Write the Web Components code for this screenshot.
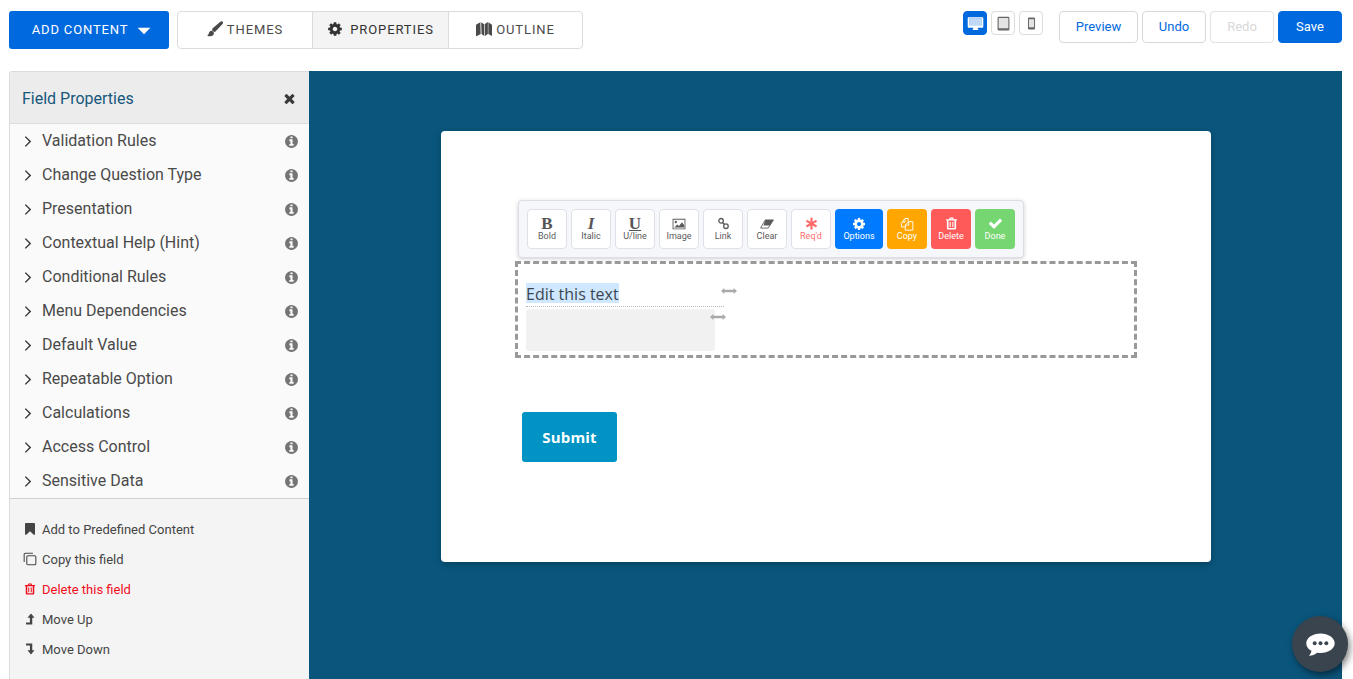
<!DOCTYPE html>
<html>
<head>
<meta charset="utf-8">
<title>Form builder</title>
<style>
  html, body { margin: 0; height: 100%; overflow: hidden; background: #fff; font-family: Roboto, sans-serif; }
</style>
</head>
<body>
<form-builder></form-builder>
<script>
// svg icons, 1792 grid ones are the font-awesome shapes, the others are drawn on a 24 grid
const FA = {
  cog: 'M1152 896q0-106-75-181t-181-75-181 75-75 181 75 181 181 75 181-75 75-181zm512-109v222q0 12-8 23t-20 13l-185 28q-19 54-39 91 35 50 107 138 10 12 10 25t-9 23q-27 37-99 108t-94 71q-12 0-26-9l-138-108q-44 23-91 38-16 136-29 186-7 28-36 28h-222q-14 0-24.5-8.5t-11.5-21.5l-28-184q-49-16-90-37l-141 107q-10 9-25 9-14 0-25-11-126-114-165-168-7-10-7-23 0-12 8-23 15-21 51-66.5t54-70.5q-27-50-41-99l-183-27q-13-2-21-12.5t-8-23.5v-222q0-12 8-23t19-13l186-28q14-46 39-92-40-57-107-138-10-12-10-24 0-10 9-23 26-36 98.5-107.5t94.5-71.5q13 0 26 10l138 107q44-23 91-38 16-136 29-186 7-28 36-28h222q14 0 24.5 8.5t11.5 21.5l28 184q49 16 90 37l142-107q9-9 24-9 13 0 25 10 129 119 165 170 7 8 7 22 0 12-8 23-15 21-51 66.5t-54 70.5q26 50 41 98l183 28q13 2 21 12.5t8 23.5z',
  info: 'M1152 1376v-160q0-14-9-23t-23-9h-96v-512q0-14-9-23t-23-9h-320q-14 0-23 9t-9 23v160q0 14 9 23t23 9h96v320h-96q-14 0-23 9t-9 23v160q0 14 9 23t23 9h448q14 0 23-9t9-23zm-128-896v-160q0-14-9-23t-23-9h-192q-14 0-23 9t-9 23v160q0 14 9 23t23 9h192q14 0 23-9t9-23zm640 416q0 209-103 385.5t-279.5 279.5-385.5 103-385.5-103-279.5-279.5-103-385.5 103-385.5 279.5-279.5 385.5-103 385.5 103 279.5 279.5 103 385.5z',
  times: 'M1490 1322q0 40-28 68l-136 136q-28 28-68 28t-68-28l-294-294-294 294q-28 28-68 28t-68-28l-136-136q-28-28-28-68t28-68l294-294-294-294q-28-28-28-68t28-68l136-136q28-28 68-28t68 28l294 294 294-294q28-28 68-28t68 28l136 136q28 28 28 68t-28 68l-294 294 294 294q28 28 28 68z',
  check: 'M1671 566q0 40-28 68l-724 724-136 136q-28 28-68 28t-68-28l-136-136-362-362q-28-28-28-68t28-68l136-136q28-28 68-28t68 28l294 295 656-657q28-28 68-28t68 28l136 136q28 28 28 68z',
  bookmark: 'M1420 128q23 0 44 9 33 13 52.5 41t19.5 62v1289q0 34-19.5 62t-52.5 41q-19 8-44 8-48 0-83-32l-441-424-441 424q-36 33-83 33-23 0-44-9-33-13-52.5-41t-19.5-62v-1289q0-34 19.5-62t52.5-41q21-9 44-9h1048z'
}
const DRAWN = {
  caret: '<path d="M1 6.500h22l-11 11z" fill="currentColor"/>',
  brush: '<path d="M23.500 1c-1-1-2.500-.8-3.500.1L9 10.500c-1 1-1.500 2-1.600 3.300l3.200 2.800c1.300-.2 2.400-.9 3.200-2L23.300 4.400c.9-1 1.100-2.400.2-3.400z" fill="currentColor"/><path d="M6.800 14.600c-2.400.3-3.600 1.900-4 3.800-.3 1.500-1 2.600-2.600 3.200 2.800 1.900 6.700 1.700 8.900-.3 1.300-1.200 1.600-2.600 1-3.900-.6-1.300-1.800-2.600-3.300-2.800z" fill="currentColor"/>',
  map: '<path d="M0 5.500L6.500 2l.5 17.500L.8 23 0 22.500zM7.800 2l4.200 3 .3 17.500-4-3zM13 5l4-3 .8 0v17.500L13.300 22.500zM18.500 2L24 5.500V22.500L18.500 19.500z" fill="currentColor"/>',
  desktop: '<path fill-rule="evenodd" d="M2.500 3h19A1.500 1.500 0 0 1 23 4.500v12a1.500 1.500 0 0 1-1.500 1.500H15c0 1.200.5 2 1 2.500v.5H8v-.5c.5-.5 1-1.300 1-2.500H2.500A1.500 1.500 0 0 1 1 16.500v-12A1.500 1.500 0 0 1 2.500 3zM3 5v9.500h18V5z" fill="currentColor"/><rect x="3" y="5" width="18" height="9.500" fill="#fff" opacity=".75"/>',
  tablet: '<path fill-rule="evenodd" d="M4.500 1h15a2 2 0 0 1 2 2v18a2 2 0 0 1-2 2h-15a2 2 0 0 1-2-2V3a2 2 0 0 1 2-2zM4.300 3v16.500h15.400V3z" fill="currentColor"/><rect x="4.300" y="3" width="15.400" height="16.500" fill="currentColor" opacity=".18"/>',
  phone: '<path fill-rule="evenodd" d="M7.500 1h9a2 2 0 0 1 2 2v18a2 2 0 0 1-2 2h-9a2 2 0 0 1-2-2V3a2 2 0 0 1 2-2zM7.300 4v15h9.400V4z" fill="currentColor"/><rect x="7.300" y="4" width="9.400" height="15" fill="currentColor" opacity=".18"/>',
  chevron: '<path d="M8 3l9 9-9 9" fill="none" stroke="currentColor" stroke-width="2.600"/>',
  image: '<path fill-rule="evenodd" d="M1 3h22v18H1zM2.500 4.500v15h19v-15z" fill="currentColor"/><circle cx="6.500" cy="8.500" r="2" fill="currentColor"/><path d="M4 18l5-5 3 2.500 5-6.500 4 5v4z" fill="currentColor"/>',
  link: '<circle cx="7.500" cy="7" r="4.200" fill="none" stroke="currentColor" stroke-width="2.400"/><circle cx="16.500" cy="17" r="4.200" fill="none" stroke="currentColor" stroke-width="2.400"/><path d="M10 10l4 4" stroke="currentColor" stroke-width="2.400"/>',
  eraser: '<path d="M9 5h14L14 19H1z" fill="none" stroke="currentColor" stroke-width="1.500"/><path d="M9 5h14l-6 9.500H6z" fill="currentColor"/>',
  asterisk: '<path d="M10 1.500h4v7.300l6.300-3.600 2 3.500-6.300 3.500 6.300 3.500-2 3.500-6.300-3.600v7.300h-4v-7.300l-6.300 3.600-2-3.500L8 12.200 1.700 8.700l2-3.500L10 8.800z" fill="currentColor"/>',
  copy: '<path d="M9 17H2.500v-6l6-8.500H14V8" fill="none" stroke="currentColor" stroke-width="1.600"/><path d="M8.500 2.500V9H3" fill="none" stroke="currentColor" stroke-width="1.400"/><path d="M15 8h7v14.500H9V13.500zM15 8v6H9.500" fill="none" stroke="currentColor" stroke-width="1.600"/>',
  trash: '<path fill-rule="evenodd" d="M9 1h6l1.500 3H22v2.500h-1.500V21a2 2 0 0 1-2 2h-13a2 2 0 0 1-2-2V6.500H2V4h5.500zM10 4h4l-.6-1h-2.800zM6.500 6.500V20.500h11V6.500zM8.500 9H10.500v9.500H8.500zM13.500 9h2v9.500h-2z" fill="currentColor"/>',
  copyline: '<path d="M2 17V4a2 2 0 0 1 2-2h13" fill="none" stroke="currentColor" stroke-width="1.800"/><rect x="6.500" y="6.500" width="15.500" height="15.500" rx="2" fill="none" stroke="currentColor" stroke-width="1.800"/>',
  up: '<path d="M14 1l7 8.500h-4.500V23H4v-3.800h7.800V9.500H7z" fill="currentColor"/>',
  down: '<path d="M4 1h12.500v13.500H21L14 23l-7-8.500h4.800V4.800H4z" fill="currentColor"/>',
  resize: '<path d="M0 6l5-4.500V4.200h14V1.500L24 6l-5 4.500V7.800H5v2.700z" fill="currentColor"/>',
  chat: '<path d="M12 3.500c6 0 11 3.300 11 7.500s-5 7.500-11 7.500c-.9 0-1.800-.1-2.700-.2-1.500 1.400-3.700 2.300-6.300 2.500 1-1 1.800-2.300 2-3.900C2.800 15.900 1 13.600 1 11c0-4.200 5-7.500 11-7.500z" fill="#fff"/><circle cx="7.500" cy="11" r="1.500" fill="#3a444e"/><circle cx="12" cy="11" r="1.500" fill="#3a444e"/><circle cx="16.500" cy="11" r="1.500" fill="#3a444e"/>'
}

class UiIcon extends HTMLElement {
  connectedCallback() {
    const name = this.getAttribute('name')
    const size = this.getAttribute('size') || 14
    const inner = FA[name]
      ? `<svg viewBox="0 0 1792 1792" width="${size}" height="${size}"><path fill="currentColor" d="${FA[name]}"/></svg>`
      : `<svg viewBox="0 0 24 24" width="${size}" height="${size}">${DRAWN[name]}</svg>`
    this.attachShadow({ mode: 'open' }).innerHTML = `
      <style>
        :host { display: inline-flex; flex: none; }
        svg { display: block; }
      </style>${inner}`
  }
}
customElements.define('ui-icon', UiIcon)

class ModeTab extends HTMLElement {
  connectedCallback() {
    this.attachShadow({ mode: 'open' }).innerHTML = `
      <style>
        :host {
          display: flex; align-items: center; justify-content: center; gap: 4px;
          width: 135px; box-sizing: border-box; height: 100%; padding-bottom: 2px;
          font: 400 13px Roboto, sans-serif; letter-spacing: .9px; color: #4a4a4a;
        }
        :host([active]) { background: #f4f4f4; color: #333; gap: 7px; }
      </style>
      <ui-icon name="${this.getAttribute('icon')}" size="${this.getAttribute('icon-size') || 16}"></ui-icon>
      <slot></slot>`
  }
}
customElements.define('mode-tab', ModeTab)

class DeviceButton extends HTMLElement {
  connectedCallback() {
    this.attachShadow({ mode: 'open' }).innerHTML = `
      <style>
        :host {
          display: flex; align-items: center; justify-content: center;
          width: 24px; height: 24px; box-sizing: border-box;
          border: 1px solid #dcdcdc; border-radius: 4px; color: #666; background: #fff;
        }
        :host([active]) { background: #0069de; border-color: #0069de; color: #fff; }
      </style>
      <ui-icon name="${this.getAttribute('icon')}" size="${this.getAttribute('size') || 14}"></ui-icon>`
  }
}
customElements.define('device-button', DeviceButton)

class ActionButton extends HTMLElement {
  connectedCallback() {
    this.attachShadow({ mode: 'open' }).innerHTML = `
      <style>
        :host {
          display: flex; align-items: center; justify-content: center;
          width: 64px; height: 32px; box-sizing: border-box; padding-bottom: 2px;
          border: 1px solid #d8d8d8; border-radius: 4px; background: #fff;
          font: 400 13px Roboto, sans-serif; color: #0069de;
        }
        :host([wide]) { width: 79px; }
        :host([disabled]) { color: #d8d8d8; border-color: #e2e2e2; }
        :host([primary]) { background: #0069de; border-color: #0069de; color: #fff; }
      </style>
      <slot></slot>`
  }
}
customElements.define('action-button', ActionButton)

class TopBar extends HTMLElement {
  connectedCallback() {
    this.attachShadow({ mode: 'open' }).innerHTML = `
      <style>
        :host { display: flex; align-items: flex-start; height: 71px; box-sizing: border-box; padding: 11px 11px 0 9px; }
        .add {
          display: flex; align-items: center; justify-content: center; gap: 9px;
          width: 160px; height: 38px; box-sizing: border-box; padding: 0 0 2px 5px;
          border-radius: 3px; background: #0069de; color: #fff;
          font: 400 13px Roboto, sans-serif; letter-spacing: .85px;
        }
        .add ui-icon { margin-top: 3px; }
        .tabs {
          display: flex; width: 406px; height: 38px; margin-left: 8px; box-sizing: border-box;
          border: 1px solid #dcdcdc; border-radius: 4px; overflow: hidden;
        }
        mode-tab + mode-tab { border-left: 1px solid #dcdcdc; }
        .devices { display: flex; gap: 4px; margin-left: auto; }
        .actions { display: flex; gap: 4px; margin-left: 16px; }
      </style>
      <div class="add">ADD CONTENT <ui-icon name="caret" size="14"></ui-icon></div>
      <div class="tabs">
        <mode-tab icon="brush" style="width:134px">THEMES</mode-tab>
        <mode-tab icon="cog" active style="width:136px">PROPERTIES</mode-tab>
        <mode-tab icon="map" style="width:134px">OUTLINE</mode-tab>
      </div>
      <div class="devices">
        <device-button icon="desktop" active size="17"></device-button>
        <device-button icon="tablet" size="15"></device-button>
        <device-button icon="phone" size="13"></device-button>
      </div>
      <div class="actions">
        <action-button wide>Preview</action-button>
        <action-button>Undo</action-button>
        <action-button disabled>Redo</action-button>
        <action-button primary>Save</action-button>
      </div>`
  }
}
customElements.define('top-bar', TopBar)

class PanelRow extends HTMLElement {
  connectedCallback() {
    this.attachShadow({ mode: 'open' }).innerHTML = `
      <style>
        :host {
          display: flex; align-items: center; height: 34px; box-sizing: border-box;
          padding: 0 10px 0 11px; font: 400 16px Roboto, sans-serif; color: #4a4a4a;
        }
        .label { margin-left: 8px; flex: 1; padding-bottom: 1px; }
        ui-icon:last-child { color: #757575; }
        .chev { color: #333; }
      </style>
      <ui-icon class="chev" name="chevron" size="13"></ui-icon>
      <span class="label"><slot></slot></span>
      <ui-icon name="info" size="15"></ui-icon>`
  }
}
customElements.define('panel-row', PanelRow)

class PanelLink extends HTMLElement {
  connectedCallback() {
    this.attachShadow({ mode: 'open' }).innerHTML = `
      <style>
        :host {
          display: flex; align-items: center; gap: 6px; height: 30px;
          font: 400 13px Roboto, sans-serif; color: #444;
        }
        :host([danger]) { color: #f00d1c; }
        .box { display: flex; justify-content: center; width: 13px; }
      </style>
      <span class="box"><ui-icon name="${this.getAttribute('icon')}" size="${this.getAttribute('size') || 12}"></ui-icon></span>
      <slot></slot>`
  }
}
customElements.define('panel-link', PanelLink)

class SidePanel extends HTMLElement {
  connectedCallback() {
    this.attachShadow({ mode: 'open' }).innerHTML = `
      <style>
        :host {
          display: flex; flex-direction: column; flex: none; width: 300px; box-sizing: border-box;
          border: 1px solid #dcdcdc; border-width: 1px 0 0 1px; background: #f4f4f4;
          border-top-left-radius: 3px; margin-left: 9px;
        }
        header {
          display: flex; align-items: center; justify-content: space-between; box-sizing: border-box;
          height: 52px; padding: 1px 12px 0 12px; background: #ececec; border-bottom: 1px solid #dedede;
          font: 400 16px Roboto, sans-serif; color: #17577c;
        }
        header ui-icon { color: #3a3a3a; }
        .rows { background: #fafafa; border-bottom: 1px solid #cfcfcf; height: 374px; }
        .links { padding: 15px 0 0 13px; }
      </style>
      <header>Field Properties <ui-icon name="times" size="15"></ui-icon></header>
      <div class="rows">
        <panel-row>Validation Rules</panel-row>
        <panel-row>Change Question Type</panel-row>
        <panel-row>Presentation</panel-row>
        <panel-row>Contextual Help (Hint)</panel-row>
        <panel-row>Conditional Rules</panel-row>
        <panel-row>Menu Dependencies</panel-row>
        <panel-row>Default Value</panel-row>
        <panel-row>Repeatable Option</panel-row>
        <panel-row>Calculations</panel-row>
        <panel-row>Access Control</panel-row>
        <panel-row>Sensitive Data</panel-row>
      </div>
      <div class="links">
        <panel-link icon="bookmark" size="14">Add to Predefined Content</panel-link>
        <panel-link icon="copyline" size="14">Copy this field</panel-link>
        <panel-link icon="trash" danger>Delete this field</panel-link>
        <panel-link icon="up" size="12">Move Up</panel-link>
        <panel-link icon="down" size="12">Move Down</panel-link>
      </div>`
  }
}
customElements.define('side-panel', SidePanel)

class ToolButton extends HTMLElement {
  connectedCallback() {
    this.attachShadow({ mode: 'open' }).innerHTML = `
      <style>
        :host {
          display: flex; flex-direction: column; align-items: center; justify-content: center;
          width: 40px; height: 40px; box-sizing: border-box; padding-top: 1px;
          border: 1px solid #dfe1e8; border-radius: 4px; background: #fff; color: #5a5a5a;
          font: 400 9px Roboto, sans-serif;
        }
        :host([tone]) { border: 0; color: #fff; }
        :host([tone=options]) { background: #007bff; width: 48px; }
        :host([tone=copy]) { background: #ffa600; }
        :host([tone=delete]) { background: #ff5a5a; }
        :host([tone=done]) { background: #76d672; }
        :host([tone=req]) { color: #ff6b6b; border: 1px solid #dfe1e8; background: #fff; }
        .glyph { height: 13px; display: flex; align-items: center; justify-content: center; color: inherit; }
        .text { line-height: 11px; margin-top: 1px; }
      </style>
      <div class="glyph"><slot name="glyph"></slot></div>
      <div class="text"><slot></slot></div>`
  }
}
customElements.define('tool-button', ToolButton)

class FieldToolbar extends HTMLElement {
  connectedCallback() {
    const letter = 'font:700 17px/13px \'Liberation Serif\',serif;color:#555;'
    this.attachShadow({ mode: 'open' }).innerHTML = `
      <style>
        :host {
          display: flex; gap: 4px; width: 506px; height: 58px; box-sizing: border-box; padding: 8px;
          background: #f6f7fb; border: 1px solid #dcdde2; border-radius: 4px;
          box-shadow: 0 1px 4px rgba(0,0,0,.18);
        }
      </style>
      <tool-button><span slot="glyph" style="${letter}">B</span>Bold</tool-button>
      <tool-button><span slot="glyph" style="${letter}font-style:italic">I</span>Italic</tool-button>
      <tool-button><span slot="glyph" style="${letter}text-decoration:underline">U</span>U/line</tool-button>
      <tool-button><ui-icon slot="glyph" name="image" size="14"></ui-icon>Image</tool-button>
      <tool-button><ui-icon slot="glyph" name="link" size="13"></ui-icon>Link</tool-button>
      <tool-button><ui-icon slot="glyph" name="eraser" size="14"></ui-icon>Clear</tool-button>
      <tool-button tone="req"><ui-icon slot="glyph" name="asterisk" size="13"></ui-icon>Req'd</tool-button>
      <tool-button tone="options"><ui-icon slot="glyph" name="cog" size="14"></ui-icon>Options</tool-button>
      <tool-button tone="copy"><ui-icon slot="glyph" name="copy" size="14"></ui-icon>Copy</tool-button>
      <tool-button tone="delete"><ui-icon slot="glyph" name="trash" size="13"></ui-icon>Delete</tool-button>
      <tool-button tone="done"><ui-icon slot="glyph" name="check" size="15"></ui-icon>Done</tool-button>`
  }
}
customElements.define('field-toolbar', FieldToolbar)

class EditField extends HTMLElement {
  connectedCallback() {
    this.attachShadow({ mode: 'open' }).innerHTML = `
      <style>
        :host {
          display: block; width: 622px; height: 97px; box-sizing: border-box;
          border: 3px dashed #999; padding: 19px 0 0 8px; margin: 3px 0 0 -3px;
          font: 400 16px "Open Sans", sans-serif; color: #3d4650;
        }
        .label { position: relative; width: 198px; height: 23px; border-bottom: 1px dotted #bbb; }
        .label mark { display: inline-block; height: 20px; line-height: 23px; background: #cfe8ff; color: inherit; }
        .input { position: relative; width: 189px; height: 42px; margin-top: 2px; background: #f1f1f1; border-radius: 3px; }
        /* drag handles sit on top of the field */
        ui-icon { position: absolute; color: #aaa; }
        .label ui-icon { left: 195px; top: 4px; }
        .input ui-icon { left: 184px; top: 4px; }
      </style>
      <div class="label"><mark>Edit this text</mark><ui-icon name="resize" size="16"></ui-icon></div>
      <div class="input"><ui-icon name="resize" size="16"></ui-icon></div>`
  }
}
customElements.define('edit-field', EditField)

class FormCard extends HTMLElement {
  connectedCallback() {
    this.attachShadow({ mode: 'open' }).innerHTML = `
      <style>
        :host {
          display: block; width: 770px; height: 431px; box-sizing: border-box;
          margin: 60px 0 0 132px; padding: 69px 0 0 77px;
          background: #fff; border-radius: 4px; box-shadow: 0 2px 6px rgba(0,0,0,.25);
        }
        .submit {
          display: flex; align-items: center; justify-content: center;
          width: 95px; height: 50px; margin: 54px 0 0 4px; border-radius: 3px;
          background: #0093c4; color: #fff; font: 700 15px "Open Sans", sans-serif; letter-spacing: .2px;
        }
      </style>
      <field-toolbar></field-toolbar>
      <edit-field></edit-field>
      <div class="submit">Submit</div>`
  }
}
customElements.define('form-card', FormCard)

class FormBuilder extends HTMLElement {
  connectedCallback() {
    this.attachShadow({ mode: 'open' }).innerHTML = `
      <style>
        :host { display: flex; flex-direction: column; height: 679px; overflow: hidden; }
        .main { display: flex; flex: 1; min-height: 0; padding-right: 11px; }
        .canvas { flex: 1; background: #0a557c; min-width: 0; }
        .chat {
          position: absolute; left: 1292px; top: 616px; width: 56px; height: 56px; border-radius: 50%;
          display: flex; align-items: center; justify-content: center; color: #fff;
          background: #3a444e; box-shadow: 2px 3px 7px rgba(0,0,0,.5);
        }
      </style>
      <top-bar></top-bar>
      <div class="main">
        <side-panel></side-panel>
        <div class="canvas"><form-card></form-card></div>
      </div>
      <div class="chat"><ui-icon name="chat" size="31"></ui-icon></div>`
  }
}
customElements.define('form-builder', FormBuilder)
</script>
</body>
</html>
